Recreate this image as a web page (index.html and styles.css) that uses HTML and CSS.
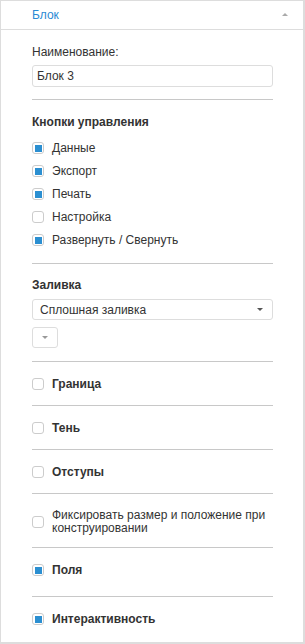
FILE: index.html
```html
<!DOCTYPE html>
<html lang="ru">
<head>
  <meta charset="UTF-8">
  <meta name="viewport" content="width=device-width, initial-scale=1.0">
  <title>Блок</title>
  <link rel="stylesheet" href="styles.css">
</head>
<body>
  <div class="panel">
    <!-- Заголовок панели -->
    <div class="panel-header">
      <span class="panel-title">Блок</span>
      <span class="collapse-arrow"></span>
    </div>

    <div class="panel-body">
      <!-- Наименование -->
      <div class="section section-name">
        <div class="label">Наименование:</div>
        <div class="text-input">Блок 3</div>
      </div>

      <!-- Кнопки управления -->
      <div class="section section-buttons">
        <div class="heading">Кнопки управления</div>
        <div class="check-list">
          <div class="check-row"><span class="checkbox checked"></span>Данные</div>
          <div class="check-row"><span class="checkbox checked"></span>Экспорт</div>
          <div class="check-row"><span class="checkbox checked"></span>Печать</div>
          <div class="check-row"><span class="checkbox"></span>Настройка</div>
          <div class="check-row"><span class="checkbox checked"></span>Развернуть / Свернуть</div>
        </div>
      </div>

      <!-- Заливка -->
      <div class="section section-fill">
        <div class="heading">Заливка</div>
        <div class="select">
          <span>Сплошная заливка</span>
          <span class="select-arrow"></span>
        </div>
        <div class="color-button"><span class="small-arrow"></span></div>
      </div>

      <div class="section">
        <div class="check-row heading"><span class="checkbox"></span>Граница</div>
      </div>

      <div class="section">
        <div class="check-row heading"><span class="checkbox"></span>Тень</div>
      </div>

      <div class="section">
        <div class="check-row heading"><span class="checkbox"></span>Отступы</div>
      </div>

      <div class="section section-fixed">
        <div class="check-row multi"><span class="checkbox"></span><span>Фиксировать размер и положение при конструировании</span></div>
      </div>

      <div class="section section-fields">
        <div class="check-row heading"><span class="checkbox checked"></span>Поля</div>
      </div>

      <div class="section section-last">
        <div class="check-row heading"><span class="checkbox checked"></span>Интерактивность</div>
      </div>
    </div>
  </div>
</body>
</html>
```

FILE: styles.css
```css
/* Общие стили */
body {
  margin: 0;
  padding: 0;
  font-family: "Liberation Sans", Arial, sans-serif;
  font-size: 12px;
  color: #333;
  background-color: #FFF;
}

/* Панель */
.panel {
  width: 305px;
  height: 644px;
  box-sizing: border-box;
  border: 1px solid #DDD;
  border-right-width: 2px;
  border-bottom-width: 2px;
  background-color: #FFF;
}

.panel-header {
  height: 28px;
  border-bottom: 1px solid #DDD;
  display: flex;
  align-items: center;
  justify-content: space-between;
  padding: 0 15px 0 31px;
}

.panel-title {
  color: #2A8AD4;
}

.collapse-arrow {
  width: 0;
  height: 0;
  border-left: 3px solid transparent;
  border-right: 3px solid transparent;
  border-bottom: 3px solid #AAA;
  margin-top: -1px;
}

.panel-body {
  padding: 0 30px 0 31px;
}

/* Секции */
.section {
  padding: 14px 0 13px;
  border-bottom: 1px solid #C8C8C8;
}

.section-last {
  border-bottom: none;
}

.label,
.heading {
  line-height: 16px;
}

.heading {
  font-weight: bold;
}

.section-name {
  padding-bottom: 12px;
}

.text-input {
  margin-top: 5px;
  height: 20px;
  line-height: 20px;
  border: 1px solid #DDD;
  border-radius: 3px;
  padding: 0 4px;
}

.section-buttons {
  padding-bottom: 15px;
}

.check-list {
  margin-top: 10px;
  display: flex;
  flex-direction: column;
  gap: 7px;
}

.check-row {
  display: flex;
  align-items: center;
  gap: 8px;
  line-height: 16px;
}

.checkbox {
  width: 10px;
  height: 10px;
  border: 1px solid #CCC;
  border-radius: 3px;
  background-color: #FFF;
  display: flex;
  align-items: center;
  justify-content: center;
  flex-shrink: 0;
}

.checkbox.checked::after {
  content: "";
  width: 7px;
  height: 7px;
  background-color: #2B8FD1;
}

/* Заливка */
.section-fill {
  padding-top: 13px;
}

.select {
  margin-top: 6px;
  height: 19px;
  border: 1px solid #DDD;
  border-radius: 3px;
  display: flex;
  align-items: center;
  justify-content: space-between;
  padding: 0 9px 0 7px;
}

.select-arrow {
  width: 0;
  height: 0;
  border-left: 3px solid transparent;
  border-right: 3px solid transparent;
  border-top: 3px solid #555;
}

.color-button {
  margin-top: 7px;
  width: 24px;
  height: 19px;
  border: 1px solid #DDD;
  border-radius: 3px;
  display: flex;
  align-items: center;
  justify-content: center;
}

.small-arrow {
  width: 0;
  height: 0;
  border-left: 3px solid transparent;
  border-right: 3px solid transparent;
  border-top: 3px solid #999;
}

/* Фиксация */
.section-fixed {
  padding: 15px 0 12px;
}

.check-row.multi {
  line-height: 13px;
}

.section-fields {
  padding-bottom: 18px;
}
```
